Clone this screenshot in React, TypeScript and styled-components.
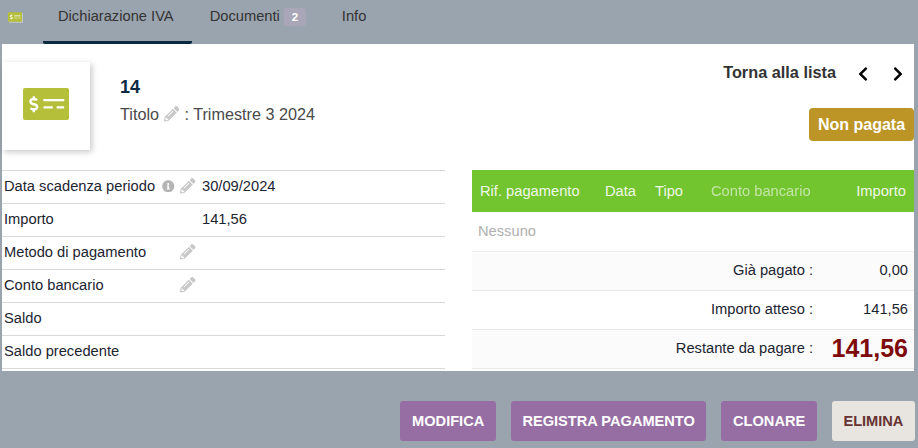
import React from 'react';
import styled, { createGlobalStyle } from 'styled-components';
import { FaChevronLeft, FaChevronRight, FaInfoCircle, FaPencilAlt } from 'react-icons/fa';

const GlobalStyle = createGlobalStyle`
  html, body {
    margin: 0;
    padding: 0;
    background: #9aa4ae;
    font-family: "Liberation Sans", Arial, sans-serif;
  }
`;

const Page = styled.div`
  width: 918px;
  height: 448px;
  overflow: hidden;
  display: flex;
  flex-direction: column;
  background: #9aa4ae;
  color: #262626;
`;

const Tabs = styled.nav`
  height: 44px;
  display: flex;
  align-items: stretch;
  padding-left: 8px;
  box-sizing: border-box;
`;

const TabIcon = styled.div`
  width: 35px;
  padding-top: 12px;
  line-height: 0;
  box-sizing: border-box;

  svg {
    filter: drop-shadow(1.5px 1.5px 0 rgba(255, 255, 255, 0.4));
  }
`;

const Tab = styled.div<{ $active?: boolean }>`
  display: flex;
  align-items: flex-start;
  gap: 4px;
  padding: 8px 18px 0 15px;
  margin-right: 3px;
  height: 44px;
  box-sizing: border-box;
  font-size: 14.7px;
  line-height: 17px;
  color: #333;
  border-bottom: 3px solid ${p => (p.$active ? '#0a2a43' : 'transparent')};
  border-radius: 0 0 2px 2px;
`;

const TabBadge = styled.span`
  width: 22px;
  height: 18px;
  border-radius: 3px;
  background: #a9a6b8;
  color: #fff;
  font-size: 11.5px;
  font-weight: bold;
  line-height: 18px;
  text-align: center;
`;

const Card = styled.main`
  width: 912px;
  height: 327px;
  margin-left: 2px;
  box-sizing: border-box;
  background: #fff;
  padding-top: 18px;
  display: flex;
  flex-direction: column;
`;

const Header = styled.header`
  height: 108px;
  display: flex;
  align-items: flex-start;
`;

const Thumb = styled.div`
  width: 88px;
  height: 88px;
  box-sizing: border-box;
  padding-bottom: 4px;
  display: flex;
  align-items: center;
  justify-content: center;
  background: #fff;
  box-shadow: 2px 2px 6px rgba(0, 0, 0, 0.22);
`;

const TitleBlock = styled.div`
  margin-left: 30px;
  padding-top: 15px;
  flex: 1;
`;

const Ref = styled.div`
  font-size: 18px;
  font-weight: bold;
  line-height: 21px;
  color: #0a2a43;
`;

const Subtitle = styled.div`
  margin-top: 6px;
  font-size: 16.2px;
  line-height: 20px;
  color: #4a4a4a;
  display: flex;
  align-items: center;
  gap: 5px;
`;

const Edit = styled(FaPencilAlt)`
  color: #c8c8c8;
  font-size: 15.5px;
  flex: none;
`;

const Side = styled.div`
  display: flex;
  flex-direction: column;
  align-items: flex-end;
`;

const Pager = styled.div`
  display: flex;
  align-items: center;
  height: 20px;
  font-size: 16.3px;
  font-weight: bold;
  color: #333;
`;

const Arrow = styled.span`
  color: #000;
  font-size: 16px;
  width: 35px;
  padding-top: 3px;
  display: flex;
  justify-content: center;
  line-height: 0;
`;

const PagerArrows = styled.div`
  display: flex;
  margin: 0 -1px 0 9px;
`;

const Status = styled.div`
  margin-top: 26px;
  width: 105px;
  height: 33px;
  border-radius: 4px;
  background: #bc9526;
  color: #fff;
  font-size: 16px;
  font-weight: bold;
  line-height: 33px;
  text-align: center;
`;

const Columns = styled.section`
  display: flex;
  justify-content: space-between;
`;

const Left = styled.div`
  width: 443px;
  border-top: 1px solid #d9d9d9;
`;

const Field = styled.div`
  height: 33px;
  box-sizing: border-box;
  padding-bottom: 2px;
  border-bottom: 1px solid #d9d9d9;
  display: flex;
  align-items: center;
  font-size: 14.7px;
  color: #1c2430;
`;

const FieldLabel = styled.div`
  width: 178px;
  padding-left: 2px;
  box-sizing: border-box;
  display: flex;
  align-items: center;
  gap: 7px;
  white-space: nowrap;
`;

const FieldEdit = styled.div`
  width: 22px;
  display: flex;
  align-items: center;
`;

const Info = styled(FaInfoCircle)`
  color: #b4b4b4;
  font-size: 12.5px;
  flex: none;
`;

const Right = styled.div`
  width: 442px;
`;

const Payments = styled.div`
  height: 42px;
  background: #72c52e;
  display: flex;
  align-items: center;
  font-size: 14.7px;
  color: #f0f6e8;
  white-space: nowrap;
`;

const Col = styled.span<{ $w: number; $muted?: boolean; $right?: boolean }>`
  width: ${p => p.$w}px;
  padding: 0 8px;
  box-sizing: border-box;
  text-align: ${p => (p.$right ? 'right' : 'left')};
  opacity: ${p => (p.$muted ? 0.65 : 1)};
`;

const Empty = styled.div`
  height: 40px;
  box-sizing: border-box;
  padding-left: 6px;
  line-height: 38px;
  border-bottom: 1px solid #eee;
  font-size: 14.7px;
  color: #b0b0b0;
`;

const Total = styled.div<{ $shade?: boolean }>`
  height: 39px;
  box-sizing: border-box;
  padding-bottom: 2px;
  display: flex;
  align-items: center;
  justify-content: flex-end;
  border-bottom: 1px solid #e8e8e8;
  background: ${p => (p.$shade ? '#fbfbfb' : '#fff')};
  font-size: 14.7px;
  color: #1c2430;
`;

const TotalValue = styled.div`
  width: 101px;
  padding-right: 6px;
  box-sizing: border-box;
  text-align: right;
`;

const Remaining = styled.span`
  font-size: 25px;
  font-weight: bold;
  color: #7e0a0a;
`;

const Actions = styled.footer`
  display: flex;
  justify-content: flex-end;
  gap: 15px;
  padding: 30px 3px 0 0;
`;

const Action = styled.div<{ $danger?: boolean }>`
  height: 40px;
  padding: 0 11.6px;
  border-radius: 3px;
  background: ${p => (p.$danger ? '#e8e4e0' : '#966ea4')};
  color: ${p => (p.$danger ? '#633' : '#fff')};
  font-size: 14.6px;
  font-weight: bold;
  line-height: 40px;
`;

const DOLLAR =
  'M176 327.88V344c0 4.42-3.58 8-8 8h-16c-4.42 0-8-3.58-8-8v-16.29c-11.29-.58-22.27-4.52-31.37-11.35-3.9-2.93-4.1-8.77-.57-12.14l11.75-11.21c2.77-2.64 6.89-2.76 10.13-.73 3.87 2.42 8.26 3.72 12.82 3.72h28.11c6.5 0 11.8-5.92 11.8-13.19 0-5.95-3.61-11.19-8.77-12.73l-45-13.5c-18.59-5.58-31.58-23.42-31.58-43.39 0-24.52 19.05-44.44 42.67-45.07V152c0-4.42 3.58-8 8-8h16c4.42 0 8 3.58 8 8v16.29c11.29.58 22.27 4.51 31.37 11.35 3.9 2.93 4.1 8.77.57 12.14l-11.75 11.21c-2.77 2.64-6.89 2.76-10.13.73-3.87-2.43-8.26-3.72-12.82-3.72h-28.11c-6.5 0-11.8 5.92-11.8 13.19 0 5.95 3.61 11.19 8.77 12.73l45 13.5c18.59 5.58 31.58 23.42 31.58 43.39 0 24.53-19.05 44.44-42.67 45.07z';

// same shape as the module icon, but taller than the stock money-check
const CheckIcon = ({ width, height }: { width: number; height: number }) => (
  <svg width={width} height={height} viewBox="0 0 46 32" aria-hidden="true">
    <rect width="46" height="32" rx="2" fill="#b5bf3a" />
    <g fill="#fff" transform="translate(-1.6 -3) scale(0.0775 0.0775)">
      <path d={DOLLAR} />
    </g>
    <g fill="#fff">
      <rect x="20.3" y="11" width="21" height="2.2" rx="0.4" />
      <rect x="20.5" y="18.2" width="9.3" height="2.2" rx="0.4" />
      <rect x="33.6" y="18.2" width="7.6" height="2.2" rx="0.4" />
    </g>
  </svg>
);

const rows = [
  { label: 'Data scadenza periodo', info: true, edit: true, value: '30/09/2024' },
  { label: 'Importo', value: '141,56' },
  { label: 'Metodo di pagamento', edit: true },
  { label: 'Conto bancario', edit: true },
  { label: 'Saldo' },
  { label: 'Saldo precedente' },
];

export default function App() {
  return (
    <Page>
      <GlobalStyle />
      <Tabs>
        <TabIcon>
          <CheckIcon width={14} height={10} />
        </TabIcon>
        <Tab $active>Dichiarazione IVA</Tab>
        <Tab>
          Documenti <TabBadge>2</TabBadge>
        </Tab>
        <Tab>Info</Tab>
      </Tabs>
      <Card>
        <Header>
          <Thumb>
            <CheckIcon width={46} height={32} />
          </Thumb>
          <TitleBlock>
            <Ref>14</Ref>
            <Subtitle>
              Titolo <Edit /> : Trimestre 3 2024
            </Subtitle>
          </TitleBlock>
          <Side>
            <Pager>
              Torna alla lista
              <PagerArrows>
                <Arrow>
                  <FaChevronLeft />
                </Arrow>
                <Arrow>
                  <FaChevronRight />
                </Arrow>
              </PagerArrows>
            </Pager>
            <Status>Non pagata</Status>
          </Side>
        </Header>
        <Columns>
          <Left>
            {rows.map(r => (
              <Field key={r.label}>
                <FieldLabel>
                  {r.label}
                  {r.info && <Info />}
                </FieldLabel>
                <FieldEdit>{r.edit && <Edit />}</FieldEdit>
                {r.value}
              </Field>
            ))}
          </Left>
          <Right>
            <Payments>
              <Col $w={125}>Rif. pagamento</Col>
              <Col $w={50}>Data</Col>
              <Col $w={56}>Tipo</Col>
              <Col $w={131} $muted>Conto bancario</Col>
              <Col $w={80} $right>Importo</Col>
            </Payments>
            <Empty>Nessuno</Empty>
            <Total $shade>
              Già pagato :<TotalValue>0,00</TotalValue>
            </Total>
            <Total>
              Importo atteso :<TotalValue>141,56</TotalValue>
            </Total>
            <Total $shade>
              Restante da pagare :
              <TotalValue>
                <Remaining>141,56</Remaining>
              </TotalValue>
            </Total>
          </Right>
        </Columns>
      </Card>
      <Actions>
        <Action>MODIFICA</Action>
        <Action>REGISTRA PAGAMENTO</Action>
        <Action>CLONARE</Action>
        <Action $danger>ELIMINA</Action>
      </Actions>
    </Page>
  );
}
